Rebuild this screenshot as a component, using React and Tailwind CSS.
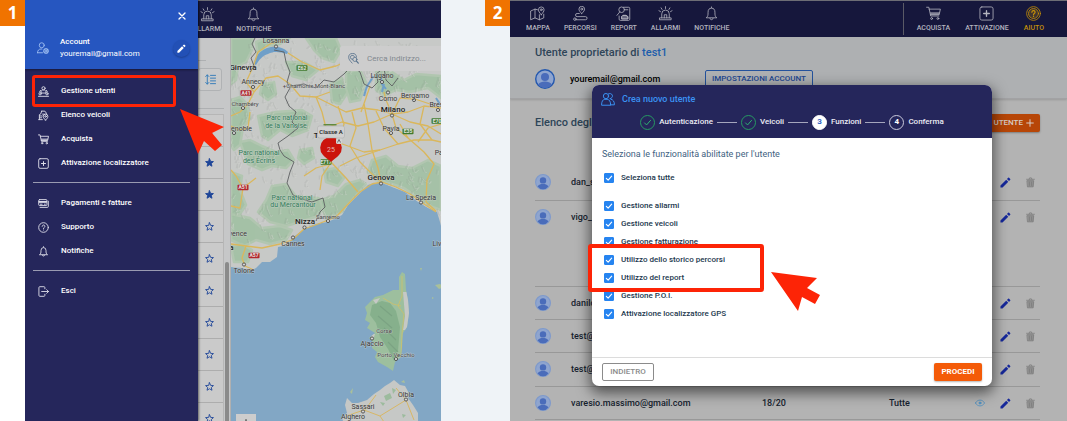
import React from "react";

/* ---------- icons ---------- */

function Icon({ className = "size-[15px]", children, width = 1.3, fill = "none" }) {
  return (
    <svg
      viewBox="0 0 24 24"
      className={"shrink-0 " + className}
      fill={fill}
      stroke="currentColor"
      strokeWidth={width}
      strokeLinecap="round"
      strokeLinejoin="round"
      aria-hidden="true"
    >
      {children}
    </svg>
  );
}

const MapIcon = (p) => (
  <Icon {...p}>
    <path d="M12 6 8 5 1 8v14l7-3 7 3 7-3v-6M8 5v14M15 14v8" />
    <path d="M18 14c-3-3.600-4.500-5.600-4.500-8a4.500 4.500 0 0 1 9 0c0 2.400-1.500 4.400-4.500 8z" />
    <circle cx="18" cy="6" r="1.500" />
  </Icon>
);
const RouteIcon = (p) => (
  <Icon {...p}>
    <path d="M14 12c-3-3-4.500-4.800-4.500-7a4.500 4.500 0 0 1 9 0c0 2.200-1.500 4-4.500 7z" />
    <circle cx="14" cy="5" r="1.500" />
    <path d="M10 12H6.500a2.500 2.500 0 0 0 0 5H20a2.500 2.500 0 0 1 0 5H5" />
    <circle cx="3" cy="21" r="2" />
  </Icon>
);
const ReportIcon = (p) => (
  <Icon {...p}>
    <path d="M12 2h8a2 2 0 0 1 2 2v17a2 2 0 0 1-2 2H7a2 2 0 0 1-2-2v-5" />
    <circle cx="9" cy="6" r="4.500" />
    <path d="M6 9.500 1.500 15M15 6h4M9 20v-3l2-2h5l3 2v3z" />
    <path d="M9 20v-3l2-2h5l3 2v3z" fill="currentColor" fillOpacity=".5" />
  </Icon>
);
const AlarmIcon = (p) => (
  <Icon {...p}>
    <path d="M6 19v-6.500a6 6 0 0 1 12 0V19M3 19h18v3H3zM10 19v-5h4v5M12 1v3M5 3l1.500 2.500M19 3l-1.500 2.500M1.500 7.500 4 9M22.500 7.500 20 9" />
  </Icon>
);
const BellIcon = (p) => (
  <Icon {...p}>
    <path d="M12 2.500v-1M4 18.500c2.500-2 2.500-4 2.500-8.500a5.500 6.500 0 0 1 11 0c0 4.500 0 6.500 2.500 8.500zM9.500 20a2.600 2.600 0 0 0 5 0" />
  </Icon>
);
const CartIcon = (p) => (
  <Icon {...p}>
    <path d="M1 2h3.500l3 14h13M5 5h18l-2 9H7.200" />
    <path d="m6.500 10 .9 4H21l1-4z" fill="currentColor" stroke="none" opacity=".7" />
    <circle cx="9" cy="20" r="1.500" />
    <circle cx="19" cy="20" r="1.500" />
  </Icon>
);
const PlusBoxIcon = (p) => (
  <Icon {...p}>
    <rect x="1.500" y="1.500" width="21" height="21" rx="3" />
    <path d="M12 7.500v9M7.500 12h9" strokeWidth="2.200" />
  </Icon>
);
const CoinHelpIcon = (p) => (
  <Icon {...p}>
    <circle cx="12" cy="12" r="11" />
    <circle cx="12" cy="12" r="8" fill="currentColor" fillOpacity=".25" />
    <path d="M9.500 10a2.500 2.500 0 1 1 3.800 2c-.9.600-1.300 1-1.300 2M12 16.500v.3" strokeWidth="2" />
  </Icon>
);
const HelpIcon = (p) => (
  <Icon {...p}>
    <circle cx="12" cy="12" r="10.500" />
    <path d="M9 9.500a3 3 0 1 1 4.600 2.500c-1.100.7-1.600 1.200-1.600 2.300M12 17.400v.2" />
  </Icon>
);
const UserCogIcon = (p) => (
  <Icon {...p}>
    <circle cx="9.500" cy="6.500" r="5" />
    <path d="M1 21.500c0-5 3-7.500 7-7.500h2M1 21.500h10" />
    <circle cx="18" cy="18" r="2" />
    <circle cx="18" cy="18" r="4.500" strokeDasharray="2.400 1.200" strokeWidth="2.400" />
  </Icon>
);
const TeamIcon = (p) => (
  <Icon {...p}>
    <circle cx="12" cy="5" r="3.500" />
    <path d="M6.500 14.500c0-4 1.500-6 5.500-6s5.500 2 5.500 6zM5.500 9.500 3.500 13M18.500 9.500l2 3.500" />
    <circle cx="4.500" cy="17" r="2.500" />
    <circle cx="19.500" cy="17" r="2.500" />
    <path d="M1 22.500h22" />
  </Icon>
);
const FleetIcon = (p) => (
  <Icon {...p}>
    <path d="M8 2.500h7l3 4v3M3 21V10l3-1.500L8 2.500M1.500 21h8M3 13h6M3 17h5" />
    <path d="M16.500 22c-4-4-5-5.500-5-8a5 5 0 0 1 10 0c0 2.500-1 4-5 8z" />
    <circle cx="16.500" cy="14" r="1.800" />
    <path d="M10 9h4" />
  </Icon>
);
const PaymentIcon = (p) => (
  <Icon {...p}>
    <rect x="1.500" y="3.500" width="18" height="13" rx="2" />
    <path d="M4.500 20.500h16a2 2 0 0 0 2-2V7M2 8h17" />
    <path d="M2 6.500h17v4H2z" fill="currentColor" stroke="none" />
    <path d="M5 13.500h4M14 13.500h2" />
  </Icon>
);
const ExitIcon = (p) => (
  <Icon {...p}>
    <path d="M15 6V3.500a2 2 0 0 0-2-2H4a2 2 0 0 0-2 2v17a2 2 0 0 0 2 2h9a2 2 0 0 0 2-2V18M8 12h15M19 8l4 4-4 4" />
  </Icon>
);
const UsersIcon = (p) => (
  <Icon {...p}>
    <circle cx="8.500" cy="7" r="4.500" />
    <path d="M1 22c0-6 2-9 5.500-9.500h4C14.500 13 16.500 16 16.500 22z" />
    <path d="M12.500 3.400A4.500 4.500 0 1 1 15.500 11.500M17 12.500c4 .5 6 4 6 9.500h-6.500" />
  </Icon>
);
const PencilIcon = (p) => (
  <Icon {...p} width={0} fill="currentColor">
    <path d="M1 18.500V23h4.500L18 10.500 13.500 6zM22.300 6.200a1.500 1.500 0 0 0 0-2.100l-2.400-2.400a1.500 1.500 0 0 0-2.100 0L15.200 4.300l4.500 4.500z" />
  </Icon>
);
const TrashIcon = (p) => (
  <Icon {...p} width={1.6}>
    <path d="M5 8h14l-1.200 13.500H6.200z" fill="currentColor" fillOpacity=".55" />
    <path d="M3.500 5h17M9 4.500 10 2h4l1 2.500M9.500 11v7.500M14.500 11v7.500" />
  </Icon>
);
const EyeIcon = (p) => (
  <Icon {...p} width={2}>
    <path d="M1 12c3-5 7-7 11-7s8 2 11 7c-3 5-7 7-11 7s-8-2-11-7z" />
    <circle cx="12" cy="12" r="2.500" fill="currentColor" />
  </Icon>
);
const CloseIcon = (p) => (
  <Icon {...p} width={4}>
    <path d="m3 3 18 18M21 3 3 21" />
  </Icon>
);
const CheckIcon = (p) => (
  <Icon {...p}>
    <path d="m4 13 5.500 5.500L20 6.500" />
  </Icon>
);
const PlusIcon = (p) => (
  <Icon {...p} width={3}>
    <path d="M12 2v20M2 12h20" />
  </Icon>
);
const SortIcon = (p) => (
  <Icon {...p} width={2}>
    <path d="M5 2v20M1.500 5.500 5 2l3.500 3.500M1.500 18.500 5 22l3.500-3.500M12 3h11M12 9h11M12 15h11M12 21h11" />
  </Icon>
);
const StarIcon = ({ filled }) => (
  <Icon className="size-[9px]" width={2.4} fill={filled ? "currentColor" : "none"}>
    <path d="m12 2 3 7 7.500.6-5.700 5 1.800 7.400L12 18l-6.600 4 1.800-7.400-5.700-5L9 9z" strokeLinejoin="miter" />
  </Icon>
);
const SearchPinIcon = (p) => (
  <Icon {...p} width={1.8}>
    <path d="M9 22c-5-5.500-7.500-8.500-7.500-12a8.500 8.500 0 0 1 17-1M14 8a4.500 4.500 0 1 0-4 6" />
    <circle cx="15" cy="14" r="4.500" />
    <path d="m18.500 17.500 4 4.500" strokeWidth="2.500" />
  </Icon>
);

function Avatar({ className, ring }) {
  return (
    <svg viewBox="0 0 20 20" className={"block shrink-0 " + className} aria-hidden="true">
      <circle cx="10" cy="10" r="9.300" fill="#8fa5cf" stroke={ring} strokeWidth="1.400" />
      <circle cx="10" cy="8" r="4" fill="#4a6cba" />
      <path d="M3.200 15.500c1.500-2.300 4-3 6.800-3s5.300.7 6.800 3A8.600 8.600 0 0 1 10 19a8.600 8.600 0 0 1-6.800-3.500z" fill="#4a6cba" />
    </svg>
  );
}

/* ---------- annotations ---------- */

function StepBadge({ children }) {
  return (
    <div className="flex h-[26px] w-[25px] shrink-0 items-center justify-center bg-[#f07300] pb-[2px] font-['Open_Sans',sans-serif] text-[17px] leading-none font-bold text-white">
      {children}
    </div>
  );
}

function Pointer({ className, points }) {
  return (
    <svg viewBox="0 0 50 46" className={"absolute h-[46px] w-[50px] " + className} aria-hidden="true">
      <polygon points={points} fill="#fd2406" />
    </svg>
  );
}

/* ---------- top navigation ---------- */

const NAV = [
  ["MAPPA", MapIcon],
  ["PERCORSI", RouteIcon],
  ["REPORT", ReportIcon],
  ["ALLARMI", AlarmIcon],
  ["NOTIFICHE", BellIcon],
];

function NavItem({ label, icon: Glyph, className = "text-[#b4b4bf]" }) {
  return (
    <a href="#" className={"flex shrink-0 flex-col items-center gap-[3px] " + className}>
      <Glyph />
      <span className="text-[7px] leading-[8px] font-medium">{label}</span>
    </a>
  );
}

/* ---------- map ---------- */

const COAST =
  "M231 267 242 268 250 271 256 268 262 262 270 262 277 257 278 247 288 245 292 238 303 230 315 224 328 222 342 215 348 205 358 195 368 185 375 183 382 183 392 187 405 192 418 202 428 208 437 212 440 222 441 226";
const CORSICA =
  "M399 277 402 272 405 274 406 290 408 300 409 313 407 327 403 333 402 347 401 357 395 362 393 371 387 367 378 362 375 357 377 352 372 348 373 342 369 338 375 333 367 328 370 323 365 320 367 313 365 307 370 302 375 297 383 295 393 290 399 290z";
const SARDINIA =
  "M347 398 352 403 358 403 367 400 374 394 380 390 385 386 390 383 394 380 400 385 405 386 410 395 408 398 413 405 418 413 418 421 343 421 342 418 347 413 345 405z";

const GREENS = [
  "M231 38 253 38 252 50 246 62 238 66 236 80 231 84z",
  "M231 100 240 97 247 104 250 118 243 128 240 145 234 150 231 146z",
  "M258 116 276 112 302 110 312 116 308 130 292 136 280 130 268 140 262 136z",
  "M231 172 242 176 240 190 246 205 240 214 231 216z",
  "M240 142 250 140 262 146 276 152 288 150 294 160 286 168 272 166 262 170 248 164z",
  "M272 186 286 184 296 196 318 198 326 204 318 216 300 222 286 226 270 222 258 212 266 200z",
  "M320 200 334 196 346 184 360 180 366 184 352 200 342 212 326 220z",
  "M372 160 386 156 398 166 412 168 428 160 441 166 441 210 430 206 418 198 404 188 392 184 376 180 368 172z",
  "M231 214 250 218 262 228 280 226 292 230 286 240 270 244 256 240 244 246 231 240z",
  "M231 246 242 244 252 250 248 262 234 262z",
  "M330 84 342 78 348 92 340 104 332 102z",
  "M346 72 360 70 366 82 360 100 350 102 346 88z",
  "M376 72 392 72 404 80 416 74 441 76 441 98 428 88 410 92 396 90 384 96 376 90z",
  "M306 38 336 38 341 50 334 62 322 58 314 50z",
  "M286 62 304 62 318 70 306 80 292 76z",
  "M262 84 274 82 276 94 268 100 260 94z",
  "M324 170 336 168 344 178 338 186 326 182z",
  "M256 42 266 38 290 38 280 44 266 46 258 56z",
  "M300 150 312 148 314 158 304 164 298 158z",
];

const ROADS = [
  "M253 67 258 52 270 44 284 40M253 67 246 82 254 92 248 104 240 112 231 116M254 92 266 78 278 76 290 84 300 96 316 97 330 92",
  "M288 53 302 62 320 70 336 66 350 60",
  "M231 126 240 130 248 128 250 112",
  "M316 97 322 112 326 128 331 138 324 152 330 164 322 176 320 190",
  "M316 97 330 104 346 112 362 108 378 110 392 114 408 112 424 106 441 108",
  "M326 128 342 122 358 126 374 122 392 114 386 100 384 92",
  "M331 140 348 146 364 152 380 150 398 144 414 140 432 140 441 142",
  "M352 112 356 128 350 146 360 162 372 174 381 182",
  "M364 104 368 124 372 150 378 168 381 182",
  "M392 114 396 128 408 138 424 152 434 164 427 180 426 202 436 211",
  "M392 114 410 122 428 126 441 134",
  "M331 162 346 178 358 192M304 229 318 224 336 217 350 202 360 192 372 184 382 182 396 187 410 194 424 204 436 212",
  "M304 229 292 240 280 244 262 248 246 246 231 244M246 246 242 258 245 266 254 270M231 206 240 208 243 188 236 176 231 170M243 188 256 178",
  "M392 114 400 98 415 99 430 104M361 112 366 98 370 86M408 138 400 124",
  "M330 164 316 168 304 176M418 142 428 128 441 124M340 166 356 158 380 150",
  "M338 106 344 124 340 138M376 111 384 128 398 144M424 106 420 124 432 140",
];

const BORDERS = [
  "M255 38 252 44 256 52 251 58 254 66 250 72",
  "M274 50 284 52 286 62 290 72 287 82 290 88 285 97 289 106 296 112 292 122 298 128 288 136 278 143 280 150 284 156 294 162 290 172 287 183 293 195 302 199 312 202 323 198 325 207 320 212 316 221",
  "M290 86 304 84 316 88 324 80 334 82 344 74 352 66 360 72 364 84 372 88 378 82 376 74 384 68 386 80 392 86 398 78",
];

const LABELS = [
  [276, 43, "Losanna"],
  [243, 69.500, "Ginevra", "b"],
  [253, 84, "Annecy"],
  [314, 88, "+Chamonix Mont-Blanc", "s"],
  [245, 106, "Chambéry", "s"],
  [238, 130.500, "Grenoble", "n"],
  [382, 78, "Lugano"],
  [388, 100.500, "Como", "n"],
  [415, 97.500, "Bergamo", "n"],
  [441, 107, "Brescia", "n"],
  [393, 112, "Milano", "b"],
  [391, 130.500, "Pavia", "n"],
  [325, 137.500, "Torino", "b"],
  [287, 120, "Parc national", "g"],
  [286, 128, "de la Vanoise", "g"],
  [259, 155, "Parc national", "g"],
  [259, 163, "des Écrins", "g"],
  [292, 200, "Parc national", "g"],
  [293, 207, "du Mercantour", "g"],
  [445, 155, "Parma", "n"],
  [381, 180, "Genova", "b"],
  [421, 200, "La Spezia", "n"],
  [328, 218.500, "Sanremo", "s"],
  [305, 224, "Nizza", "b"],
  [293, 245.500, "Cannes", "n"],
  [222, 236, "Aix-en-Provence", "n"],
  [217, 250, "Marsiglia", "b"],
  [244, 272.500, "Tolone", "n"],
  [444, 245.500, "Livorno", "n"],
  [384, 333, "Corse", "s"],
  [372, 346, "Ajaccio", "n"],
  [396, 357, "Porto Vecchio", "s"],
  [406, 397, "Olbia", "n"],
  [363, 408.500, "Sassari", "n"],
  [353, 418.500, "Alghero", "n"],
];

const LABEL_STYLES = {
  b: "fill-[#1f1f1f] text-[8px] font-medium",
  n: "fill-[#383838] text-[7px]",
  s: "fill-[#4a4a4a] text-[6px]",
  g: "fill-[#2f7d57] text-[7px]",
};

const TOWNS = [
  [276, 46.500], [253, 87], [243, 108], [234, 133], [392, 115.500], [391, 133], [382, 82], [388, 92.500],
  [414, 100], [438, 110], [381, 183.500], [421, 202.500], [328, 221], [304.500, 227.500], [293, 237.500],
  [244, 264.500], [372, 338.500], [396, 359], [406, 399.500], [363, 411.500],
];

const SHIELDS = [
  [246, 93, "A41", "#b3262d"],
  [302, 68, "E62", "#3f7a2c"],
  [243, 187.500, "A51", "#b3262d"],
  [254, 255.500, "A57", "#b3262d"],
  [408, 131.500, "E35", "#3f7a2c"],
  [437, 121, "E70", "#3f7a2c"],
  [326, 162, "E717", "#3f7a2c"],
];

/* Short slanted strokes that suggest mountain relief. */
const RELIEF = (() => {
  let seed = 7;
  const rnd = () => (seed = (seed * 16807) % 2147483647) / 2147483647;
  let d = "";
  for (let i = 0; i < 520; i++) {
    const x = 231 + rnd() * 210;
    const y = 40 + rnd() * 200;
    if (x > 318 && y > 100 && y < 160) continue;
    const a = (rnd() - 0.5) * 6;
    const b = 2 + rnd() * 4;
    d += `M${x.toFixed(1)} ${y.toFixed(1)}l${a.toFixed(1)} ${b.toFixed(1)}l${(rnd() * 3).toFixed(1)} ${(rnd() * 2 - 1).toFixed(1)}`;
  }
  return d;
})();

function TerrainMap() {
  return (
    <svg
      viewBox="231 38 210 383"
      preserveAspectRatio="xMinYMin slice"
      className="col-start-1 row-start-1 h-full w-full"
      role="img"
      aria-label="Mappa"
    >
      <clipPath id="mainland">
        <path d={COAST + "V38H231z"} />
      </clipPath>
      <clipPath id="corsica">
        <path d={CORSICA} />
      </clipPath>
      <rect x="231" y="38" width="400" height="500" fill="#82a7c5" />
      <path d={COAST + "V38H231z"} fill="#c7c9c7" />
      <g clipPath="url(#mainland)">
        {GREENS.map((d) => (
          <path key={d} d={d} fill="#9fc0a1" opacity=".85" stroke="#aec6ad" strokeWidth="2.500" strokeLinejoin="round" />
        ))}
        <path d={RELIEF} fill="none" stroke="#7f8a83" strokeWidth="1.400" opacity=".14" />
        <path d={RELIEF} fill="none" stroke="#dcdfdb" strokeWidth=".9" opacity=".3" transform="translate(1.500 1)" />
      </g>
      <path d="M254 64c1-8 6-13 13-16 7-2 15-2 21 4l-1 2c-7-2-13-3-19 0-6 2-9 6-12 11z" fill="#6f9fc8" />
      <path d="M373 76c-1 5-6 8-7 13l-2 7M381 78l1 6 4 5M384 84l-2 8M436 98l5 8" fill="none" stroke="#6f9fc8" strokeWidth="2" />
      {ROADS.map((d) => (
        <path key={d} d={d} fill="none" stroke="#dab75c" strokeWidth="1.300" strokeLinejoin="round" />
      ))}
      {BORDERS.map((d) => (
        <path key={d} d={d} fill="none" stroke="#5c5f61" strokeWidth=".9" strokeLinejoin="round" />
      ))}
      <path d={CORSICA} fill="#9dbf9e" />
      <g clipPath="url(#corsica)">
        <path d="M372 305l10-4 8 2 6 8 4 16-2 24-4 10-6-12-8-12-4-14-6-8z" fill="#86b08c" />
        <path d="M380 306l12 10M378 316l14 12M384 328l12 12M388 342l10 10" stroke="#7ba383" strokeWidth="1.200" />
        <path d="M403 292h6v38h-6l2-14z" fill="#c6c8c6" />
        <path d="M373 300l7-2-4 6zM369 334l6 0-2 6z" fill="#c6c8c6" />
        <path d="M402 276v20l-4 10 6 8-2 20-1 24M383 298l10 6 8 2" fill="none" stroke="#c9c06f" strokeWidth=".9" />
      </g>
      <path d={SARDINIA} fill="#c6c8c6" />
      <path d="M346 416l18-6 16 6 26-16M364 411l12-16M380 416l4 6M406 400l-10-12M406 400l8 20" fill="none" stroke="#d8b765" strokeWidth="1" />
      <path d="M384 396l6-3 2 5-6 3zM392 388l4 2-3 4zM380 402l5 1-2 3zM402 414l4 1-3 3z" fill="#9cbb9d" />
      <path d="M350 392l3-4-1 6zM435 285l5-1 4 3-5 2zM420 268l2 0-1 3zM432 297l2 1-2 1zM401 382l3-2 1 3z" fill="#a9c09a" />
      {TOWNS.map(([x, y]) => (
        <circle key={x + "-" + y} cx={x} cy={y} r="1.600" fill="#d4d4d4" stroke="#3d3d3d" strokeWidth=".8" />
      ))}
      {SHIELDS.map(([x, y, t, c]) => (
        <g key={t}>
          <rect x={x - 5.500} y={y - 2.750} width="11" height="5.500" rx=".8" fill={c} />
          <text x={x} y={y + 1.800} textAnchor="middle" className="fill-[#e4e4e4] text-[5px] font-bold">
            {t}
          </text>
        </g>
      ))}
      {LABELS.map(([x, y, t, k = "n"]) => (
        <text
          key={t + y}
          x={x}
          y={y}
          textAnchor="middle"
          paintOrder="stroke"
          stroke="#d0d2d0"
          strokeOpacity=".6"
          strokeWidth="1"
          className={LABEL_STYLES[k]}
        >
          {t}
        </text>
      ))}
      <rect x="323.500" y="124" width="13" height="1.500" fill="#5e8a3f" />
      <path d="M331 162c-3-3-6-4.500-8-7a10.800 10.800 0 1 1 16 0c-2 2.500-5 4-8 7z" fill="#cb140c" />
      <text x="331" y="151.500" textAnchor="middle" className="fill-[#e6b5b2] text-[7px]">
        25
      </text>
      <rect x="336" y="138" width="6" height="6" rx="1.500" fill="#d2d2d2" />
      <path d="m337.500 142.500 1.500-3 1.500 3" fill="none" stroke="#444" strokeWidth=".7" />
      <rect x="317.500" y="126" width="27" height="12" rx="2" fill="#d0d0d0" stroke="#aaa" strokeWidth=".5" />
      <text x="331" y="134" textAnchor="middle" className="fill-[#1c1c1c] text-[6px] font-medium">
        Classe A
      </text>
    </svg>
  );
}

/* ---------- first screen ---------- */

const MENU = [
  [
    ["Gestione utenti", TeamIcon],
    ["Elenco veicoli", FleetIcon],
    ["Acquista", CartIcon],
    ["Attivazione localizzatore", PlusBoxIcon],
  ],
  [
    ["Pagamenti e fatture", PaymentIcon],
    ["Supporto", HelpIcon],
    ["Notifiche", BellIcon],
  ],
  [["Esci", ExitIcon]],
];

function Drawer() {
  return (
    <aside className="absolute inset-y-0 left-0 flex w-[173px] flex-col bg-[#25265b] text-[8px] leading-[12px] font-medium text-white shadow-[1px_0_2px_rgba(0,0,0,0.5)]">
      <div className="flex h-[69px] shrink-0 flex-col bg-[#2656c0] pr-2 pl-3 shadow-[0_1px_2px_rgba(0,0,0,0.4)]">
        <button type="button" aria-label="Chiudi" className="mt-[8px] flex size-4 items-center justify-center self-end">
          <CloseIcon className="size-[8px]" />
        </button>
        <div className="mt-[12px] flex items-center">
          <UserCogIcon className="size-[12px] text-[#9ebdf0]" width={1.800} />
          <div className="ml-[11px] flex-1">
            <div>Account</div>
            <div className="font-normal">youremail@gmail.com</div>
          </div>
          <button
            type="button"
            aria-label="Modifica account"
            className="flex size-[17px] items-center justify-center rounded-full bg-[#2250b6] shadow-[0_1px_2px_rgba(0,0,0,0.25)]"
          >
            <PencilIcon className="size-[9px]" />
          </button>
        </div>
      </div>
      <nav className="divide-y divide-[#9a9bb2] px-2 pt-[3px]">
        {MENU.map((group) => (
          <ul key={group[0][0]} className="pt-2 pb-[7px] first:pt-[7px]">
            {group.map(([label, Glyph]) => (
              <li key={label}>
                <a href="#" className="flex h-6 items-center gap-3 pl-[5px]">
                  <Glyph className="size-[11px] text-[#dcdce8]" width={2} />
                  {label}
                </a>
              </li>
            ))}
          </ul>
        ))}
      </nav>
    </aside>
  );
}

function VehicleColumn() {
  return (
    <div className="flex w-[206px] shrink-0 bg-[#c6c7c8]">
      <div className="flex flex-1 flex-col">
        <div className="flex h-[71px] shrink-0 flex-col border-b border-[#aeb0b2] pr-[2px]">
          <div className="mr-4 h-[23px] border-b border-[#aeb0b2]" />
          <button
            type="button"
            aria-label="Ordina"
            className="mt-[7px] flex h-[23px] w-[24px] items-center justify-center self-end rounded-[3px] border border-[#b0b2b4] bg-[#cacaca] text-[#2f78b8]"
          >
            <SortIcon className="size-[11px]" />
          </button>
        </div>
        <ul className="mt-[5px] border-t border-r border-[#b6b6b6] bg-[#cacaca]">
          {[true, true, true, false, false, false, false, false, false, false].map((on, i) => (
            <li key={i} className="flex h-8 items-center justify-end border-b border-[#adadad] pr-[9px] text-[#1e4598]">
              <StarIcon filled={on} />
            </li>
          ))}
        </ul>
      </div>
      <div className="flex w-[7px] shrink-0 flex-col items-center border-r border-[#b0b0b0]">
        <div className="mt-[224px] w-[4px] flex-1 rounded-t bg-[#8a8a8a]" />
      </div>
    </div>
  );
}

function MapScreen() {
  return (
    <section className="relative flex h-screen min-w-0 flex-1 flex-col overflow-hidden">
      <header className="flex h-[38px] shrink-0 items-start gap-[14px] border-t border-[#6d6d75] bg-[#191a42] pt-[6px] pl-[43px]">
        {NAV.map(([label, glyph]) => (
          <NavItem key={label} label={label} icon={glyph} />
        ))}
      </header>
      <div className="flex min-h-0 flex-1">
        <VehicleColumn />
        <div className="grid min-w-0 flex-1 grid-cols-1 grid-rows-1 overflow-hidden">
          <TerrainMap />
          <div className="z-10 col-start-1 row-start-1 flex flex-col justify-between">
            <label className="mt-2 flex h-[25px] items-center gap-2 self-end rounded-l-[2px] bg-[#cdcdcd] pl-2 text-[#56718c]">
              <SearchPinIcon className="size-[11px]" />
              <input
                type="text"
                aria-label="Cerca indirizzo"
                placeholder="Cerca indirizzo..."
                className="w-[74px] bg-transparent text-[8px] leading-none outline-none placeholder:text-[#82898f]"
              />
            </label>
            <button
              type="button"
              aria-label="Ingrandisci"
              className="ml-[5px] flex h-[7px] w-5 items-start justify-center overflow-hidden bg-[#cdcdcd] pt-[5px] text-[#222]"
            >
              <PlusIcon className="size-[8px]" />
            </button>
          </div>
        </div>
      </div>
      <Drawer />
      <div className="absolute top-[75px] left-[7px] h-[32px] w-[144px] rounded-[3px] border-3 border-[#fd2406]" />
      <Pointer className="top-[109px] left-[155px]" points="0,0 44,18 32,24 42,36 35,42 24,32 18,45" />
    </section>
  );
}

/* ---------- second screen ---------- */

const USERS = [
  { name: "dan_sala@gmail.com", height: "h-[34px]" },
  { name: "vigo_rossi@gmail.com", height: "h-[86px]" },
  { name: "danilo.conti@gmail.com", height: "h-[33px]" },
  { name: "test@gmail.com", height: "h-[33px]" },
  { name: "test@gmail.com", height: "h-[34px]" },
  { name: "varesio.massimo@gmail.com", height: "h-[33px]" },
];

function UsersTable() {
  return (
    <table className="mt-[34px] w-full table-fixed text-left align-top text-[9px] leading-[17px] font-medium text-[#16222e]">
      <colgroup>
        <col className="w-[36px]" />
        <col className="w-[191px]" />
        <col className="w-[127px]" />
        <col />
        <col className="w-[24px]" />
        <col className="w-[26px]" />
        <col className="w-[22px]" />
      </colgroup>
      <tbody>
        {USERS.map((u, i) => (
          <tr key={i} className={"border-b border-[#989898] align-top *:pt-[8px] " + u.height}>
            <td>
              <Avatar className="size-4" ring="#7f9acb" />
            </td>
            <td>{u.name}</td>
            <td>18/20</td>
            <td>Tutte</td>
            <td>
              <button type="button" aria-label="Visualizza" className="mx-auto flex h-[17px] items-center text-[#4f8fc0]">
                <EyeIcon className="size-[10px]" />
              </button>
            </td>
            <td>
              <button type="button" aria-label="Modifica" className="mx-auto flex h-[17px] items-center text-[#16289a]">
                <PencilIcon className="size-[11px]" />
              </button>
            </td>
            <td>
              <button type="button" aria-label="Elimina" className="mr-1 ml-auto flex h-[17px] items-center text-[#777]">
                <TrashIcon className="size-[11px]" />
              </button>
            </td>
          </tr>
        ))}
      </tbody>
    </table>
  );
}

function Step({ label, number, state }) {
  const tone = {
    done: "border-[#259a62] text-[#2fb574]",
    current: "border-white bg-white text-[#2b62c4]",
    next: "border-[#c9c9dc] text-white",
  }[state];
  return (
    <li className="flex items-center gap-1">
      <span className={"flex size-[15px] items-center justify-center rounded-full border font-bold " + tone}>
        {state === "done" ? <CheckIcon className="size-[9px]" width={2.600} /> : number}
      </span>
      {label}
    </li>
  );
}

function StepLine() {
  return <li aria-hidden="true" className="h-px w-5 bg-[#a5a6bd]" />;
}

function Feature({ label }) {
  return (
    <label className="flex h-[18px] items-center gap-[7px]">
      <span className="grid size-[10px]">
        <input
          type="checkbox"
          defaultChecked
          className="peer col-start-1 row-start-1 size-[10px] appearance-none rounded-[1px] border border-[#2684f0] checked:bg-[#2684f0]"
        />
        <CheckIcon className="pointer-events-none invisible col-start-1 row-start-1 size-[10px] p-px text-white peer-checked:visible" width={3.400} />
      </span>
      {label}
    </label>
  );
}

const FEATURES = [
  "Gestione allarmi",
  "Gestione veicoli",
  "Gestione fatturazione",
  "Utilizzo dello storico percorsi",
  "Utilizzo del report",
  "Gestione P.O.I.",
  "Attivazione localizzatore GPS",
];

function NewUserDialog() {
  return (
    <div
      role="dialog"
      aria-label="Crea nuovo utente"
      className="flex min-w-0 flex-1 flex-col overflow-hidden rounded-[7px] bg-white text-[#22384e] shadow-[0_5px_14px_2px_rgba(0,0,0,0.55)]"
    >
      <div className="flex flex-col gap-[8px] bg-[#25265b] px-[9px] pt-[7px] pb-[8px]">
        <h2 className="flex items-center gap-[7px] text-[9px] leading-[14px] font-medium text-[#3b93f4]">
          <UsersIcon className="size-[14px]" width={1.700} />
          Crea nuovo utente
        </h2>
        <ol className="flex items-center justify-center gap-1 text-[8px] leading-[16px] font-medium text-[#ececf4]">
          <Step label="Autenticazione" state="done" />
          <StepLine />
          <Step label="Veicoli" state="done" />
          <StepLine />
          <Step label="Funzioni" number="3" state="current" />
          <StepLine />
          <Step label="Conferma" number="4" state="next" />
        </ol>
      </div>
      <div className="px-[10px] pt-[10px] pb-[34px]">
        <p className="text-[9px] leading-[12px] text-[#42627f]">Seleziona le funzionalità abilitate per l'utente</p>
        <div className="mt-[9px] pl-[2px] text-[8px] font-medium">
          <Feature label="Seleziona tutte" />
          <div className="mt-[10px]">
            {FEATURES.map((f) => (
              <Feature key={f} label={f} />
            ))}
          </div>
        </div>
      </div>
      <div className="flex items-center justify-between border-t border-[#dcdcdc] px-[10px] py-[5px] text-[8px] leading-[16px] font-medium">
        <button type="button" className="w-[52px] rounded-[2px] border border-[#8b8b8b] text-[#8b8b8b]">
          INDIETRO
        </button>
        <button type="button" className="w-[48px] rounded-[2px] bg-[#f45b08] py-px font-bold text-white shadow-[0_1px_2px_rgba(0,0,0,0.3)]">
          PROCEDI
        </button>
      </div>
    </div>
  );
}

function UsersScreen() {
  return (
    <section className="relative flex h-screen min-w-0 flex-1 flex-col overflow-hidden bg-[#b3b3b3]">
      <header className="flex h-[37px] shrink-0 items-start border-t border-[#6d6d75] bg-[#16173c] pt-[5px] pr-[23px] pl-4">
        <nav className="flex flex-1 gap-[14px]">
          {NAV.map(([label, glyph]) => (
            <NavItem key={label} label={label} icon={glyph} />
          ))}
        </nav>
        <nav className="-mt-[3px] flex h-8 gap-[15px] border-l border-[#5a5a66] pt-[3px] pl-[13px]">
          <NavItem label="ACQUISTA" icon={CartIcon} />
          <NavItem label="ATTIVAZIONE" icon={PlusBoxIcon} />
          <NavItem label="AIUTO" icon={CoinHelpIcon} className="text-[#c48f08]" />
        </nav>
      </header>
      <div className="h-[62px] shrink-0 border-b border-[#a2a2a4] bg-[#aeb0b2] px-[25px] pt-[8px] shadow-[0_1px_2px_rgba(0,0,0,0.15)]">
        <h1 className="text-[11px] leading-[15px] font-medium text-[#2e4558]">
          Utente proprietario di <span className="text-[#1c5dab]">test1</span>
        </h1>
        <div className="mt-[9px] flex items-center">
          <Avatar className="size-5" ring="#2458ae" />
          <span className="ml-[15px] w-[135px] text-[9px] leading-5 font-medium text-black">youremail@gmail.com</span>
          <button type="button" className="rounded-[2px] border border-[#24529c] px-[6px] text-[8px] leading-4 font-medium text-[#1d4690]">
            IMPOSTAZIONI ACCOUNT
          </button>
        </div>
      </div>
      <div className="pr-[27px] pl-[25px]">
        <div className="flex items-center justify-between pt-[15px]">
          <h2 className="text-[11px] leading-[18px] font-medium text-[#2e4558]">Elenco degli utenti</h2>
          <button
            type="button"
            className="flex items-center gap-[3px] rounded-[2px] bg-[#b74607] px-[6px] text-[8px] leading-[18px] font-medium text-[#d6cdc8] shadow-[0_1px_2px_rgba(0,0,0,0.3)]"
          >
            NUOVO UTENTE
            <PlusIcon className="size-[8px]" />
          </button>
        </div>
        <UsersTable />
      </div>
      <div className="absolute inset-x-0 top-[85px] flex pr-[75px] pl-[82px]">
        <NewUserDialog />
      </div>
      <div className="absolute top-[244px] left-[78px] h-[48px] w-[176px] rounded-[3px] border-4 border-[#fd2406]" />
      <Pointer className="top-[272px] left-[261px]" points="0,0 46,6 36,16 49,23 44,32 31,25 27,39" />
    </section>
  );
}

export default function App() {
  return (
    <main className="flex h-screen overflow-hidden bg-[#eff3f7] font-['Roboto',sans-serif]">
      <div className="flex min-w-0 flex-[441] bg-white">
        <StepBadge>1</StepBadge>
        <MapScreen />
      </div>
      <div className="ml-[44px] flex min-w-0 flex-[582]">
        <StepBadge>2</StepBadge>
        <UsersScreen />
      </div>
    </main>
  );
}
